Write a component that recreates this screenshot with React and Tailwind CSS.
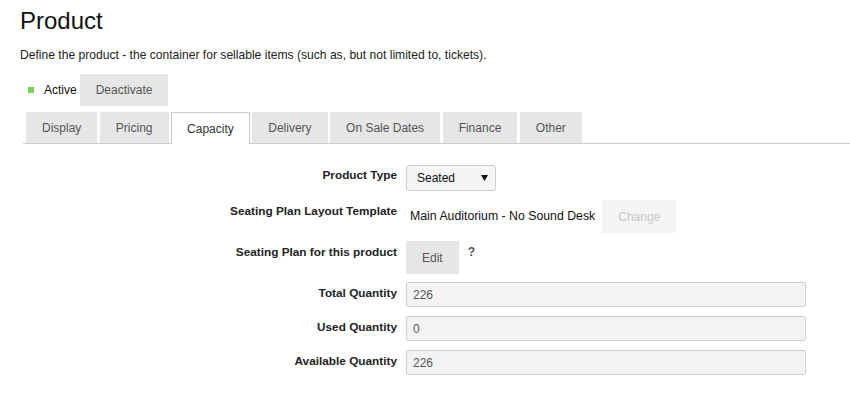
import React from 'react';

const tabs = ['Display', 'Pricing', 'Capacity', 'Delivery', 'On Sale Dates', 'Finance', 'Other'];

function Label({ children, className = '' }) {
  return (
    <div className={`w-[377px] shrink-0 text-right text-[11.8px] leading-[16px] font-bold text-[#222] ${className}`}>
      {children}
    </div>
  );
}

function ReadOnlyInput({ value }) {
  return (
    <div className="w-[400px] h-[25px] flex items-center pl-[6px] bg-[#f3f3f3] border border-[#cfcfcf] rounded-[2px] text-[12px] text-[#555]">
      {value}
    </div>
  );
}

export default function App() {
  const [active, setActive] = React.useState('Capacity');

  return (
    <div className="w-[850px] h-[401px] bg-white overflow-hidden pl-[20px] pt-[8px]" style={{ fontFamily: '"Liberation Sans", Arial, sans-serif' }}>
      {/* Header */}
      <h1 className="text-[24px] leading-[26px] text-[#111]">Product</h1>
      <p className="mt-[13px] text-[12.1px] leading-[16px] text-[#222]">
        Define the product - the container for sellable items (such as, but not limited to, tickets).
      </p>

      {/* Status */}
      <div className="mt-[11px] flex items-center h-[32px]">
        <span className="ml-[8px] w-[6px] h-[6px] bg-[#77d053]" />
        <span className="ml-[10px] text-[12px] text-[#111]">Active</span>
        <button className="ml-[3px] h-[32px] px-4 bg-[#e6e6e6] text-[12px] text-[#555]">Deactivate</button>
      </div>

      {/* Tabs */}
      <div className="mt-[6px] ml-[3px] flex gap-[2.5px] border-b border-[#cccccc] pl-[3px]">
        {tabs.map(t =>
          t === active ? (
            <button
              key={t}
              onClick={() => setActive(t)}
              className="h-[32px] -mb-px px-[15px] bg-white border border-b-0 border-[#cccccc] text-[12px] text-[#333]"
            >
              {t}
            </button>
          ) : (
            <button
              key={t}
              onClick={() => setActive(t)}
              className="h-[31px] px-4 bg-[#e6e6e6] text-[12px] text-[#555]"
            >
              {t}
            </button>
          )
        )}
      </div>

      {/* Form */}
      <div className="mt-[21px] flex flex-col">
        <div className="flex items-start gap-[9px]">
          <Label className="pt-[2px]">Product Type</Label>
          <div className="w-[90px] h-[26px] flex items-center justify-between pl-[10px] pr-[7px] bg-[#f5f5f5] border border-[#cccccc] rounded-[3px] text-[12px] text-[#111]">
            <span>Seated</span>
            <svg width="7" height="6" viewBox="0 0 7 6"><path d="M0 0h7L3.5 6z" fill="#111" /></svg>
          </div>
        </div>

        <div className="mt-[9px] flex items-start gap-[9px]">
          <Label className="pt-[3px]">Seating Plan Layout Template</Label>
          <div className="flex items-center">
            <span className="pl-[4px] text-[12.3px] text-[#111]">Main Auditorium - No Sound Desk</span>
            <button className="ml-[7px] h-[33px] px-4 bg-[#f5f5f5] text-[12px] text-[#c8c8c8]">Change</button>
          </div>
        </div>

        <div className="mt-[8px] flex items-start gap-[9px]">
          <Label className="pt-[3px]">Seating Plan for this product</Label>
          <button className="h-[33px] px-4 bg-[#e6e6e6] text-[12px] text-[#555]">Edit</button>
          <span className="pt-[3px] text-[12px] leading-[16px] font-bold text-[#555]">?</span>
        </div>

        <div className="mt-[8px] flex items-start gap-[9px]">
          <Label className="pt-[3px]">Total Quantity</Label>
          <ReadOnlyInput value="226" />
        </div>

        <div className="mt-[9px] flex items-start gap-[9px]">
          <Label className="pt-[3px]">Used Quantity</Label>
          <ReadOnlyInput value="0" />
        </div>

        <div className="mt-[9px] flex items-start gap-[9px]">
          <Label className="pt-[3px]">Available Quantity</Label>
          <ReadOnlyInput value="226" />
        </div>
      </div>
    </div>
  );
}
